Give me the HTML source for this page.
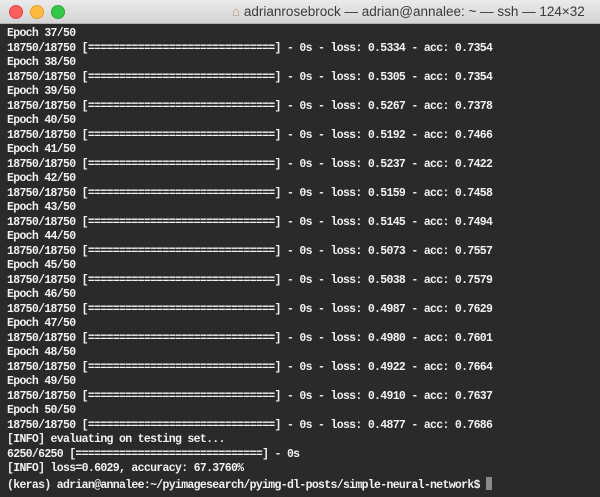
<!DOCTYPE html>
<html><head><style>
html,body{margin:0;padding:0;width:600px;height:497px;overflow:hidden;background:#2a2a2a}
.tb{position:absolute;left:0;top:0;width:600px;height:23px;background:linear-gradient(#ebebeb,#d4d4d4);border-bottom:1px solid #b0b0b0}
.dot{position:absolute;top:5px;width:12px;height:12px;border-radius:50%}
.title{position:absolute;left:232px;top:4px;font:13.5px "Liberation Sans",sans-serif;color:#3a3a3a;white-space:nowrap}
.term{position:absolute;left:7px;top:27px;font:bold 11.5px/14.5px "Liberation Mono",monospace;letter-spacing:-0.68px;color:#f2f2f2;white-space:pre}
.cur{display:inline-block;width:6px;height:13px;background:#8a8a8a;vertical-align:-2px}
</style></head><body>
<div class="tb">
<div class="dot" style="left:9px;background:#fc605c;border:0.5px solid #de4a47"></div>
<div class="dot" style="left:30px;background:#fdbc40;border:0.5px solid #dea034"></div>
<div class="dot" style="left:51px;background:#34c84a;border:0.5px solid #27aa35"></div>
<div class="title"><span style="color:#b8946a">⌂</span> adrianrosebrock — adrian@annalee: ~ — ssh — 124×32</div>
</div>
<div class="term">Epoch 37/50
18750/18750 [==============================] - 0s - loss: 0.5334 - acc: 0.7354
Epoch 38/50
18750/18750 [==============================] - 0s - loss: 0.5305 - acc: 0.7354
Epoch 39/50
18750/18750 [==============================] - 0s - loss: 0.5267 - acc: 0.7378
Epoch 40/50
18750/18750 [==============================] - 0s - loss: 0.5192 - acc: 0.7466
Epoch 41/50
18750/18750 [==============================] - 0s - loss: 0.5237 - acc: 0.7422
Epoch 42/50
18750/18750 [==============================] - 0s - loss: 0.5159 - acc: 0.7458
Epoch 43/50
18750/18750 [==============================] - 0s - loss: 0.5145 - acc: 0.7494
Epoch 44/50
18750/18750 [==============================] - 0s - loss: 0.5073 - acc: 0.7557
Epoch 45/50
18750/18750 [==============================] - 0s - loss: 0.5038 - acc: 0.7579
Epoch 46/50
18750/18750 [==============================] - 0s - loss: 0.4987 - acc: 0.7629
Epoch 47/50
18750/18750 [==============================] - 0s - loss: 0.4980 - acc: 0.7601
Epoch 48/50
18750/18750 [==============================] - 0s - loss: 0.4922 - acc: 0.7664
Epoch 49/50
18750/18750 [==============================] - 0s - loss: 0.4910 - acc: 0.7637
Epoch 50/50
18750/18750 [==============================] - 0s - loss: 0.4877 - acc: 0.7686
[INFO] evaluating on testing set...
6250/6250 [==============================] - 0s
[INFO] loss=0.6029, accuracy: 67.3760%
(keras) adrian@annalee:~/pyimagesearch/pyimg-dl-posts/simple-neural-network$ <span class="cur"></span></div>
</body></html>
